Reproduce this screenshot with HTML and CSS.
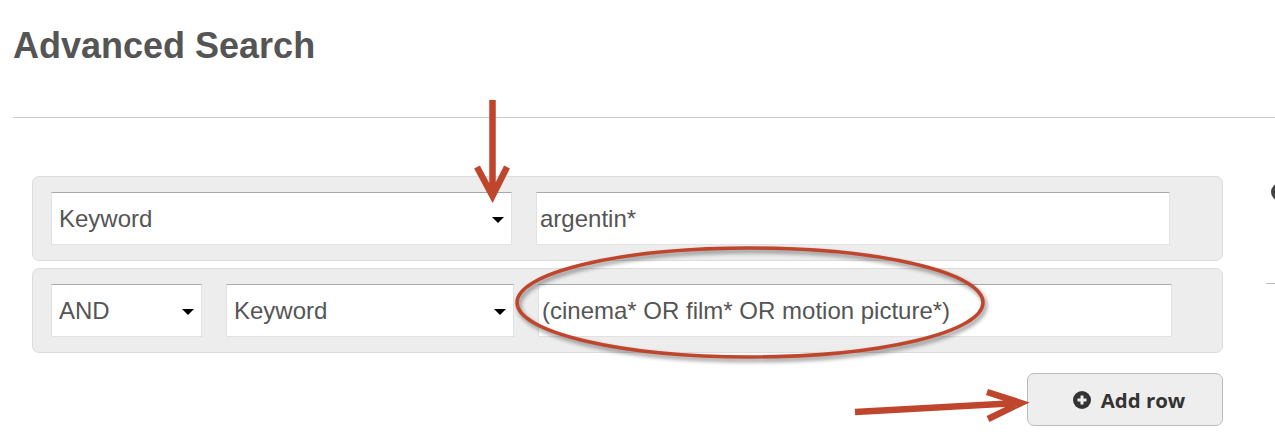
FILE: index.html
```html
<!DOCTYPE html>
<html>

<head>
    <meta charset="utf-8">
    <title>Advanced Search</title>
    <link rel="stylesheet" href="styles.css">
</head>

<body>
    <h1 class="title">Advanced Search</h1>
    <hr class="rule">

    <div class="content">
        <form class="rows">
            <div class="row">
                <div class="pick pick-wide"><select><option>Keyword</option></select></div>
                <input class="term term-first" type="text" value="argentin*">
            </div>
            <div class="row">
                <div class="pick pick-bool"><select><option>AND</option></select></div>
                <div class="pick pick-field"><select><option>Keyword</option></select></div>
                <input class="term term-second" type="text" value="(cinema* OR film* OR motion picture*)">
            </div>
            <div class="actions">
                <button class="add" type="button">
                    <svg class="add-icon" viewBox="0 0 18 18">
                        <circle cx="9" cy="9" r="9" fill="#333"/>
                        <path d="M4.500 9h9M9 4.500v9" stroke="#eee" stroke-width="3"/>
                    </svg>
                    Add row
                </button>
            </div>
        </form>
        <div class="side">
            <span class="side-dot"></span>
            <hr class="side-rule">
        </div>
    </div>

    <!-- red markup drawn over the page -->
    <svg class="marks" width="1275" height="435" viewBox="0 0 1275 435">
        <ellipse class="ring" cx="750" cy="302.5" rx="233" ry="54.5"/>
        <path class="arrow" d="M492.500 100V194M477 167L492.500 196L507 167"/>
        <path class="arrow" d="M855 412L1018 403M987 392L1021 403L988 419"/>
    </svg>
</body>
</html>
```

FILE: styles.css
```css
html {
    overflow: hidden;
}

body {
    margin: 0;
    height: 435px;
    overflow: hidden;
    position: relative;
    background-color: white;
    color: #555;
    font-family: "Liberation Sans", Arial, sans-serif;
}

.title {
    margin: 0;
    padding: 27px 0 0 13px;
    font-size: 36px;
    line-height: 38px;
    font-weight: bold;
}

.rule {
    margin: 52px 0 0 13px;
    border: 0;
    border-top: 1px solid #ccc;
}

.content {
    display: flex;
    gap: 43px;
    padding: 58px 0 0 32px;
    overflow: hidden;
}

.rows {
    width: 1191px;
    flex: none;
}

.row {
    box-sizing: border-box;
    height: 85px;
    margin-bottom: 7px;
    padding: 15px 18px;
    display: flex;
    gap: 24px;
    background-color: #ededed;
    border: 1px solid #dcdcdc;
    border-radius: 7px;
}

.pick {
    position: relative;
    height: 53px;
}

.pick::after {
    content: "";
    position: absolute;
    right: 8px;
    top: 25px;
    border-top: 6px solid black;
    border-left: 6px solid transparent;
    border-right: 6px solid transparent;
}

.pick select {
    width: 100%;
    height: 100%;
    box-sizing: border-box;
    padding: 0 7px;
    appearance: none;
    background-color: white;
    border: 1px solid #e2e2e6;
    border-top-color: #aaa;
    border-radius: 0;
    color: #555;
    font-family: inherit;
    font-size: 24px;
}

.pick-wide {
    width: 461px;
}

.pick-bool {
    width: 151px;
}

.pick-field {
    width: 288px;
}

.term {
    box-sizing: border-box;
    width: 634px;
    height: 53px;
    padding: 0 3px;
    background-color: white;
    border: 1px solid #e2e2e6;
    border-top-color: #aaa;
    color: #555;
    font-family: inherit;
    font-size: 24px;
}

.actions {
    display: flex;
    justify-content: flex-end;
    padding-top: 13px;
}

.add {
    box-sizing: border-box;
    width: 196px;
    height: 53px;
    padding: 0 0 0 8px;
    display: flex;
    align-items: center;
    justify-content: center;
    gap: 10px;
    background-color: #eee;
    border: 1px solid #bbb;
    border-radius: 7px;
    color: #333;
    font-family: "Open Sans", sans-serif;
    font-size: 20.4px;
    font-weight: bold;
}

.add-icon {
    width: 18px;
    height: 18px;
}

.side {
    flex: 1;
    min-width: 0;
    overflow: hidden;
}

.side-dot {
    display: block;
    width: 18px;
    height: 18px;
    margin: 7px 0 0 5px;
    background-color: #444;
    border-radius: 50%;
}

.side-rule {
    margin: 82px 0 0 0;
    border: 0;
    border-top: 1px solid #bbb;
}

.marks {
    position: absolute;
    left: 0;
    top: 0;
    pointer-events: none;
}

.ring {
    fill: none;
    stroke: #bf462c;
    stroke-width: 3.5;
    filter: drop-shadow(2px 3px 2px rgba(0, 0, 0, 0.45));
}

.arrow {
    fill: none;
    stroke: #bf462c;
    stroke-width: 6.5;
}
```
